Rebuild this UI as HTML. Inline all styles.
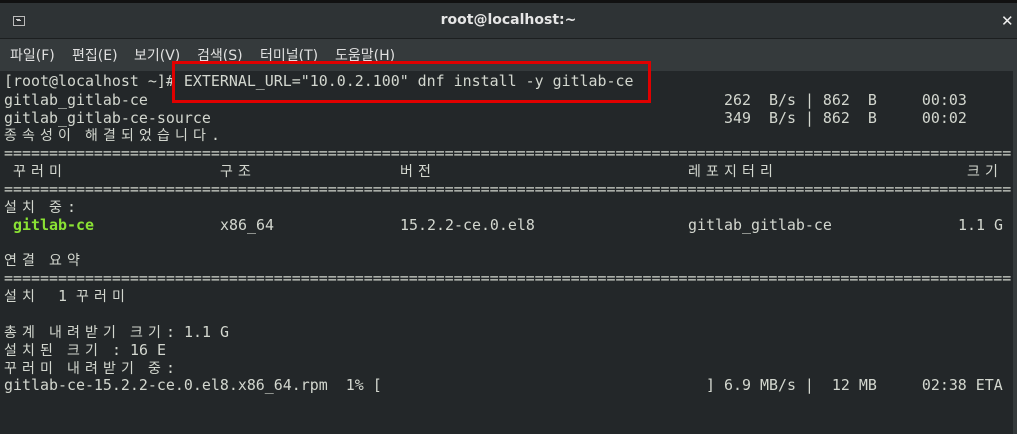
<!DOCTYPE html>
<html><head><meta charset="utf-8"><style>
*{margin:0;padding:0;box-sizing:border-box}
body{width:1017px;height:434px;overflow:hidden;background:#353a3c;position:relative;font-family:"DejaVu Sans Mono","Liberation Mono","Noto Sans CJK KR",monospace}
#top{position:absolute;left:0;top:0;width:1017px;height:3px;background:#111}
#title{position:absolute;left:0;top:3px;width:1017px;height:36px;background:#2e3335;border-bottom:1px solid #1c1f20}
#title .t{position:absolute;left:0;width:1017px;top:9px;text-align:center;color:#e6e6e6;font:bold 14px "DejaVu Sans","Liberation Sans",sans-serif}
#icon{position:absolute;left:13px;top:13px;width:12px;height:10px;border:1px solid #bbb;background:#2a2e30}
#icon:after{content:"";position:absolute;left:2px;top:2px;width:4px;height:1px;background:#ccc;box-shadow:1px 1px 0 #ccc}
#x{position:absolute;left:1001px;top:9px;color:#eee;font:bold 15px "DejaVu Sans",sans-serif}
#menu{position:absolute;left:0;top:40px;width:1017px;height:31px;background:#353a3c;color:#e0e0e0;font:14px "DejaVu Sans","Noto Sans CJK KR",sans-serif}
#menu span{position:absolute;top:5px}
#term{position:absolute;left:0;top:71px;width:1013px;height:363px;background:#232729;color:#d3d7cf;font-size:14.95px}
.r{position:absolute;left:4px;height:18px;line-height:18px;white-space:pre}
.s{position:absolute;white-space:pre}
.k{display:inline-block;width:18px;font-family:"Noto Sans CJK KR","NanumGothic",sans-serif;font-size:14px;text-align:left}
.g{color:#8ae234;font-weight:bold}
#box{position:absolute;left:172px;top:61px;width:479px;height:42px;border:3px solid #e00000}
</style></head><body>
<div id="top"></div>
<div id="title"><div id="icon"></div><div class="t">root@localhost:~</div><div id="x">✕</div></div>
<div id="menu"><span style="left:10px">파일(F)</span><span style="left:72px">편집(E)</span><span style="left:134px">보기(V)</span><span style="left:197px">검색(S)</span><span style="left:260px">터미널(T)</span><span style="left:335px">도움말(H)</span></div>
<div id="term">
<div class="r" style="top:1px">[root@localhost ~]# EXTERNAL_URL="10.0.2.100" dnf install -y gitlab-ce</div>
<div class="r" style="top:20px">gitlab_gitlab-ce<span class="s" style="left:720px">262  B/s | 862  B     00:03</span></div>
<div class="r" style="top:38px">gitlab_gitlab-ce-source<span class="s" style="left:720px">349  B/s | 862  B     00:02</span></div>
<div class="r" style="top:55px"><span class="k">종</span><span class="k">속</span><span class="k">성</span><span class="k">이</span> <span class="k">해</span><span class="k">결</span><span class="k">되</span><span class="k">었</span><span class="k">습</span><span class="k">니</span><span class="k">다</span>.</div>
<div class="r" style="top:73px">================================================================================================================</div>
<div class="r" style="top:91px"> <span class="k">꾸</span><span class="k">러</span><span class="k">미</span><span class="s" style="left:216px"><span class="k">구</span><span class="k">조</span></span><span class="s" style="left:396px"><span class="k">버</span><span class="k">전</span></span><span class="s" style="left:684px"><span class="k">레</span><span class="k">포</span><span class="k">지</span><span class="k">터</span><span class="k">리</span></span><span class="s" style="left:963px"><span class="k">크</span><span class="k">기</span></span></div>
<div class="r" style="top:109px">================================================================================================================</div>
<div class="r" style="top:127px"><span class="k">설</span><span class="k">치</span> <span class="k">중</span>:</div>
<div class="r" style="top:145px"> <span class="g">gitlab-ce</span><span class="s" style="left:216px">x86_64</span><span class="s" style="left:396px">15.2.2-ce.0.el8</span><span class="s" style="left:684px">gitlab_gitlab-ce</span><span class="s" style="left:954px">1.1 G</span></div>
<div class="r" style="top:180px"><span class="k">연</span><span class="k">결</span> <span class="k">요</span><span class="k">약</span></div>
<div class="r" style="top:198px">================================================================================================================</div>
<div class="r" style="top:216px"><span class="k">설</span><span class="k">치</span>  1 <span class="k">꾸</span><span class="k">러</span><span class="k">미</span></div>
<div class="r" style="top:252px"><span class="k">총</span><span class="k">계</span> <span class="k">내</span><span class="k">려</span><span class="k">받</span><span class="k">기</span> <span class="k">크</span><span class="k">기</span>: 1.1 G</div>
<div class="r" style="top:270px"><span class="k">설</span><span class="k">치</span><span class="k">된</span> <span class="k">크</span><span class="k">기</span> : 16 E</div>
<div class="r" style="top:288px"><span class="k">꾸</span><span class="k">러</span><span class="k">미</span> <span class="k">내</span><span class="k">려</span><span class="k">받</span><span class="k">기</span> <span class="k">중</span>:</div>
<div class="r" style="top:305px">gitlab-ce-15.2.2-ce.0.el8.x86_64.rpm  1% [<span class="s" style="left:702px">] 6.9 MB/s |  12 MB     02:38 ETA</span></div>
</div>
<div id="box"></div>
</body></html>
